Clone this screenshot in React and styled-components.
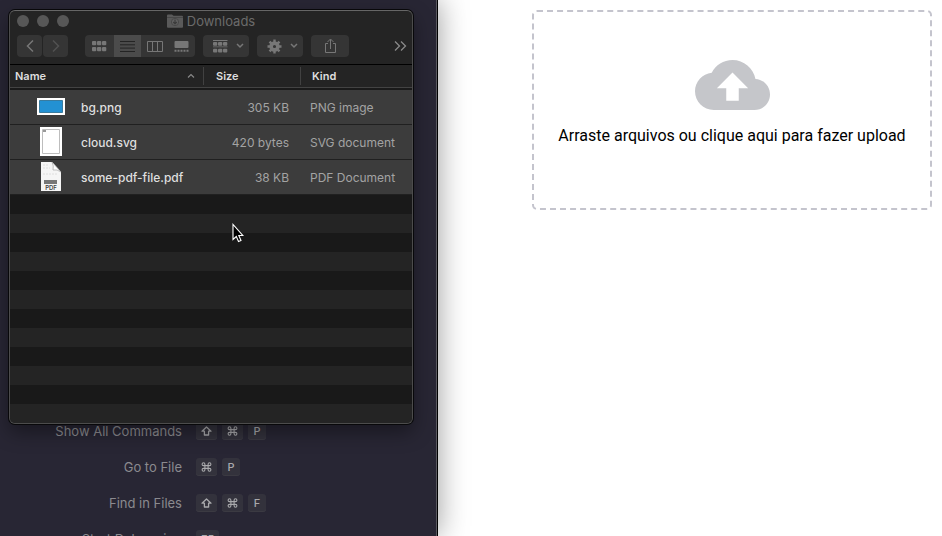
import React from "react";
import styled, { createGlobalStyle, css } from "styled-components";

const GlobalStyle = createGlobalStyle`
  * { box-sizing: border-box; }
  body { margin: 0; background: #fff; }
  button { border: 0; padding: 0; font: inherit; color: inherit; }
`;

const Desktop = styled.main`
  display: flex;
  height: 100vh;
  overflow: hidden;
  font-family: Inter, "Liberation Sans", sans-serif;
`;

const Editor = styled.section`
  position: relative;
  z-index: 1;
  flex: 0 0 438px;
  background: #282634;
  border-right: 1px solid #000;
  box-shadow: inset -1px 0 #5a5960, 0 0 28px rgba(0, 0, 0, 0.4);
`;

const Shortcuts = styled.ul`
  margin: 0;
  padding: 413px 0 0;
  list-style: none;
`;

const Shortcut = styled.li`
  display: flex;
  align-items: center;
  gap: 5px;
  height: 36px;
`;

const ShortcutLabel = styled.span`
  width: 182px;
  margin-right: 9px;
  text-align: right;
  font-size: 13px;
  color: #8b8a8f;
`;

const Key = styled.kbd`
  display: flex;
  align-items: center;
  justify-content: center;
  min-width: 18px;
  height: 18px;
  padding: 0 5px;
  border-radius: 3px;
  background: #33323c;
  box-shadow: inset 0 -1px #3b3a42;
  font-family: inherit;
  font-size: 11px;
  font-weight: 500;
  color: #a9a9ac;
`;

const Finder = styled.section`
  position: absolute;
  top: 10px;
  left: 9px;
  width: 404px;
  border: 1px solid #4c4c4c;
  border-top-color: #666;
  border-radius: 6px;
  overflow: hidden;
  background: #242424;
  box-shadow: 0 0 0 1px #08080a, 0 8px 20px rgba(0, 0, 0, 0.4);
`;

const TitleBar = styled.header`
  display: flex;
  align-items: center;
  height: 20px;
  padding: 0 7px;
`;

const Lights = styled.div`
  display: flex;
  flex: 1;
  gap: 8px;
`;

const Light = styled.button`
  width: 12px;
  height: 12px;
  border-radius: 50%;
  background: #575757;
`;

const Title = styled.h1`
  display: flex;
  align-items: center;
  gap: 4px;
  margin: 0;
  font-size: 13px;
  font-weight: 400;
  line-height: 20px;
  color: #6b6b6b;
`;

const TitleSpacer = styled.div`
  flex: 1;
`;

const Toolbar = styled.div`
  display: flex;
  align-items: center;
  gap: 8px;
  height: 34px;
  padding: 0 5px 3px 7px;
  border-bottom: 1px solid #000;
`;

const NavButtons = styled.div`
  display: flex;
  gap: 1px;
  margin-right: 9px;
`;

const Segments = styled.div`
  display: flex;
  border-radius: 4px;
  overflow: hidden;
`;

const ToolButton = styled.button`
  display: flex;
  align-items: center;
  justify-content: center;
  gap: 8px;
  width: ${(p) => p.$width}px;
  height: 22px;
  background: #353535;
  color: ${(p) => (p.$dim ? "#525252" : "#777")};
  ${(p) => !p.$joined && css`border-radius: 4px;`}
  ${(p) => p.$menu && css`padding-left: 5px;`}
  ${(p) => p.$active && css`background: #4b4b4b; color: #242424;`}
`;

const MoreButton = styled.button`
  display: flex;
  margin-left: auto;
  background: none;
  color: #8a8a8a;
`;

const Files = styled.table`
  width: 100%;
  table-layout: fixed;
  border-collapse: separate;
  border-spacing: 0;
`;

const Heading = styled.th`
  width: ${(p) => p.$width || "auto"};
  height: 25px;
  padding: 0 0 1px ${(p) => p.$inset}px;
  border-bottom: 2px solid #1a1a1a;
  box-shadow: inset 0 -1px #434343;
  text-align: left;
  font-size: 11px;
  font-weight: 600;
  color: #dedede;
`;

const HeadingRow = styled.div`
  display: flex;
  align-items: center;
  justify-content: space-between;
  height: 18px;
  padding-right: 8px;
  ${(p) => p.$divided && css`border-right: 1px solid #414141;`}
`;

const Cell = styled.td`
  height: 35px;
  padding: ${(p) => (p.$end ? "0 12px 0 0" : "0 0 0 9px")};
  border-bottom: 1px solid #202020;
  background: #3c3c3c;
  text-align: ${(p) => (p.$end ? "right" : "left")};
  white-space: nowrap;
  font-size: 12px;
  color: ${(p) => (p.$name ? "#dfdfdf" : "#a3a3a3")};
  font-weight: ${(p) => (p.$name ? 500 : 400)};
`;

const FileName = styled.div`
  display: flex;
  align-items: center;
  padding-left: 16px;
  gap: 16px;
`;

const Stripe = styled.div`
  height: 19px;
  background: #191919;
  &:nth-child(even) { background: #242424; }
`;

const Page = styled.section`
  flex: 1;
  display: flex;
  justify-content: flex-end;
  align-items: flex-start;
  padding: 10px;
`;

const DropZone = styled.label`
  display: flex;
  flex-direction: column;
  align-items: center;
  gap: 14px;
  width: 400px;
  height: 200px;
  padding-top: 48px;
  border: 2px dashed #c4c4cd;
  border-radius: 5px;
  font-family: Roboto, sans-serif;
  font-size: 16px;
  line-height: 24px;
  color: #000;
  cursor: pointer;
`;

const FileInput = styled.input`
  position: absolute;
  width: 1px;
  height: 1px;
  opacity: 0;
`;

const Pointer = styled.svg`
  position: absolute;
  top: 223px;
  left: 231px;
`;

const Chevron = ({ flip }) => (
  <svg width="10" height="14" viewBox="0 0 10 14" fill="none" stroke="currentColor" strokeWidth="1.5">
    <path d={flip ? "M2 1.5 7.5 7 2 12.5" : "M8 1.5 2.5 7 8 12.5"} />
  </svg>
);

const DownChevron = () => (
  <svg width="8" height="6" viewBox="0 0 8 6" fill="none" stroke="currentColor" strokeWidth="1.5">
    <path d="M1 1l3 3 3-3" />
  </svg>
);

const GridIcon = () => (
  <svg width="15" height="11" viewBox="0 0 15 11" fill="currentColor">
    {[0, 5, 10].map((x) => [0, 6].map((y) => (
      <rect key={`${x}-${y}`} x={x} y={y} width="4.3" height="4.3" rx="1" />
    )))}
  </svg>
);

const ListIcon = () => (
  <svg width="15" height="11" viewBox="0 0 15 11" stroke="currentColor">
    <path d="M0 .5h15M0 3.8h15M0 7.1h15M0 10.5h15" />
  </svg>
);

const ColumnsIcon = () => (
  <svg width="16" height="11" viewBox="0 0 16 11" fill="none" stroke="currentColor">
    <path d="M.5.5h15v10H.5zM5.5.5v10M10.5.5v10" />
  </svg>
);

const GalleryIcon = () => (
  <svg width="15" height="11" viewBox="0 0 15 11" fill="currentColor">
    <rect x=".5" width="14" height="7" rx="1" />
    <path d="M.5 8.7h2v2h-2zM3.5 8.7h2v2h-2zM6.5 8.7h2v2h-2zM9.5 8.7h2v2h-2zM12.5 8.7h2v2h-2z" />
  </svg>
);

const ArrangeIcon = () => (
  <svg width="15" height="13" viewBox="0 0 15 13" fill="currentColor">
    <path d="M0 0h14.5v1H0zM0 6.4h14.5v.9H0z" />
    {[0, 5, 10].map((x) => [2, 8.8].map((y) => (
      <rect key={`${x}-${y}`} x={x} y={y} width="4.3" height="3.8" rx="1" />
    )))}
  </svg>
);

const GearIcon = () => (
  <svg width="15" height="15" viewBox="-7.5 -7.5 15 15" fill="none" stroke="currentColor">
    <circle r="3.4" strokeWidth="3.6" />
    {[0, 45, 90, 135, 180, 225, 270, 315].map((a) => (
      <path key={a} d="M0-4.5V-7" strokeWidth="2.4" transform={`rotate(${a})`} />
    ))}
  </svg>
);

const ShareIcon = () => (
  <svg width="13" height="16" viewBox="0 0 13 16" fill="none" stroke="currentColor">
    <path d="M4 5.5H1.5v9h10v-9H9M6.5 11V1.5M3.5 4l3-3 3 3" />
  </svg>
);

const FolderIcon = () => (
  <svg width="16" height="14" viewBox="0 0 16 14">
    <path d="M0 1.5Q0 .5 1 .5h4l1.5 1.3H15q1 0 1 1V13q0 .7-1 .7H1q-1 0-1-.7z" fill="#5a5a5a" />
    <path d="M0 3.5h16" stroke="#484848" />
    <circle cx="8" cy="8" r="3.6" fill="#626262" stroke="#484848" />
    <path d="M8 5.5v4M6.2 8 8 9.8 9.8 8" fill="none" stroke="#3c3c3c" strokeWidth="1.2" />
  </svg>
);

const ShiftIcon = () => (
  <svg width="11" height="10" viewBox="0 0 11 10" fill="none" stroke="currentColor" strokeWidth="1.3" strokeLinejoin="round">
    <path d="M5.5 1 10 5.2H7.6V9H3.4V5.2H1z" />
  </svg>
);

const CommandIcon = () => (
  <svg width="11" height="10" viewBox="0 0 11 10" fill="none" stroke="currentColor" strokeWidth="1.1">
    <path d="M3.9 3.4V2.2a1.4 1.4 0 1 0-1.4 1.4h6a1.4 1.4 0 1 0-1.4-1.4v5.6a1.4 1.4 0 1 0 1.4-1.4h-6a1.4 1.4 0 1 0 1.4 1.4z" />
  </svg>
);

const ImageFile = () => (
  <svg width="30" height="30" viewBox="0 0 30 30">
    <path d="M2 6h28v17H2z" fill="#fff" />
    <path d="M4.5 8.5h23v12h-23z" fill="#2391d3" stroke="#397b9f" />
  </svg>
);

const VectorFile = () => (
  <svg width="30" height="30" viewBox="0 0 30 30">
    <path d="M5 0h22v29H5z" fill="#fff" />
    <path d="M7.5 2.5h17v24h-17z" fill="none" stroke="#bdbdbd" />
    <path d="M8 4h3" stroke="#999" strokeWidth="2" />
  </svg>
);

const PdfFile = () => (
  <svg width="30" height="30" viewBox="0 0 30 30">
    <path d="M6 0h11l9 10v19H6z" fill="#f5f5f5" />
    <path d="M17 0q2 4 1 8 4-1 8 2z" fill="#fff" stroke="#a6a6a6" strokeWidth=".7" />
    <path d="M8 3h6M8 6h7M8 12h15" stroke="#dedede" strokeDasharray="2 1" />
    <path d="M9 18h13v4H9z" fill="#777" />
    <text x="16" y="27.5" textAnchor="middle" fontFamily="Inter, sans-serif" fontSize="6" fontWeight="600" fill="#444">PDF</text>
  </svg>
);

const files = [
  { name: "bg.png", size: "305 KB", kind: "PNG image", Icon: ImageFile },
  { name: "cloud.svg", size: "420 bytes", kind: "SVG document", Icon: VectorFile },
  { name: "some-pdf-file.pdf", size: "38 KB", kind: "PDF Document", Icon: PdfFile },
];

const shortcuts = [
  { label: "Show All Commands", keys: ["shift", "cmd", "P"] },
  { label: "Go to File", keys: ["cmd", "P"] },
  { label: "Find in Files", keys: ["shift", "cmd", "F"] },
  { label: "Start Debugging", keys: ["F5"] },
];

const keyIcons = { shift: <ShiftIcon />, cmd: <CommandIcon /> };

export default function App() {
  return (
    <Desktop>
      <GlobalStyle />
      <Editor>
        <Shortcuts>
          {shortcuts.map(({ label, keys }) => (
            <Shortcut key={label}>
              <ShortcutLabel>{label}</ShortcutLabel>
              {keys.map((k) => <Key key={k}>{keyIcons[k] || k}</Key>)}
            </Shortcut>
          ))}
        </Shortcuts>
        <Finder>
          <TitleBar>
            <Lights>
              <Light aria-label="Close" />
              <Light aria-label="Minimize" />
              <Light aria-label="Zoom" />
            </Lights>
            <Title><FolderIcon />Downloads</Title>
            <TitleSpacer />
          </TitleBar>
          <Toolbar>
            <NavButtons>
              <ToolButton $width={25} aria-label="Back"><Chevron /></ToolButton>
              <ToolButton $width={25} $dim aria-label="Forward"><Chevron flip /></ToolButton>
            </NavButtons>
            <Segments>
              <ToolButton $width={29} $joined aria-label="Icons"><GridIcon /></ToolButton>
              <ToolButton $width={27} $joined $active aria-label="List"><ListIcon /></ToolButton>
              <ToolButton $width={27} $joined aria-label="Columns"><ColumnsIcon /></ToolButton>
              <ToolButton $width={27} $joined aria-label="Gallery"><GalleryIcon /></ToolButton>
            </Segments>
            <ToolButton $width={46} $menu aria-label="Group"><ArrangeIcon /><DownChevron /></ToolButton>
            <ToolButton $width={46} $menu aria-label="Actions"><GearIcon /><DownChevron /></ToolButton>
            <ToolButton $width={38} aria-label="Share"><ShareIcon /></ToolButton>
            <MoreButton aria-label="More">
              <svg width="13" height="10" viewBox="0 0 13 10" fill="none" stroke="currentColor" strokeWidth="1.3">
                <path d="M1 .5 5.5 5 1 9.5M7 .5 11.5 5 7 9.5" />
              </svg>
            </MoreButton>
          </Toolbar>
          <Files>
            <thead>
              <tr>
                <Heading $width="194px" $inset={5}>
                  <HeadingRow $divided>
                    Name
                    <svg width="8" height="6" viewBox="0 0 8 6" fill="none" stroke="#888" strokeWidth="1.2">
                      <path d="M1 4.5l3-3 3 3" />
                    </svg>
                  </HeadingRow>
                </Heading>
                <Heading $width="97px" $inset={12}><HeadingRow $divided>Size</HeadingRow></Heading>
                <Heading $inset={11}><HeadingRow>Kind</HeadingRow></Heading>
              </tr>
            </thead>
            <tbody>
              {files.map(({ name, size, kind, Icon }) => (
                <tr key={name}>
                  <Cell $name><FileName><Icon />{name}</FileName></Cell>
                  <Cell $end>{size}</Cell>
                  <Cell>{kind}</Cell>
                </tr>
              ))}
            </tbody>
          </Files>
          <div>
            {Array.from({ length: 12 }, (_, i) => <Stripe key={i} />)}
          </div>
        </Finder>
        <Pointer width="14" height="21" viewBox="0 0 14 21">
          <path d="M2 1.5v15l3.3-3 2.2 5 2.5-1.1-2.2-4.9h4z" fill="#000" stroke="#fff" strokeWidth="1.1" />
        </Pointer>
      </Editor>
      <Page>
        <DropZone>
          <svg width="75" height="50" viewBox="0 4 24 16" fill="#c5c6ca">
            <path d="M19.35 10.04C18.67 6.59 15.64 4 12 4 9.11 4 6.6 5.64 5.35 8.04 2.34 8.36 0 10.91 0 14c0 3.31 2.69 6 6 6h13c2.76 0 5-2.24 5-5 0-2.64-2.05-4.78-4.65-4.96zM14 13v4h-4v-4H7l5-5 5 5h-3z" />
          </svg>
          Arraste arquivos ou clique aqui para fazer upload
          <FileInput type="file" multiple />
        </DropZone>
      </Page>
    </Desktop>
  );
}
